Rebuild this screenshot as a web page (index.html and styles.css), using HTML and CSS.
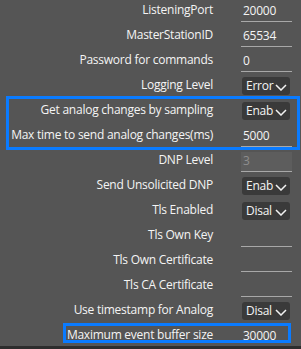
FILE: index.html
```html
<!DOCTYPE html>
<html>
<head>
<meta charset="utf-8">
<link rel="stylesheet" href="styles.css">
</head>
<body>
<div class="panel">
  <div class="row"><div class="label">ListeningPort</div><div class="tb">20000</div></div>
  <div class="row"><div class="label">MasterStationID</div><div class="tb">65534</div></div>
  <div class="row"><div class="label">Password for commands</div><div class="tb">0</div></div>
  <div class="row"><div class="label">Logging Level</div><div class="cb"><span class="cb-text">Error</span><svg class="chev" width="12" height="7" viewBox="0 0 12 7"><polyline points="1,1 6,6 11,1" fill="none" stroke="#f2f2f2" stroke-width="1.5"/></svg></div></div>
  <div class="group">
    <div class="row"><div class="label">Get analog changes by sampling</div><div class="cb"><span class="cb-text">Enab</span><svg class="chev" width="12" height="7" viewBox="0 0 12 7"><polyline points="1,1 6,6 11,1" fill="none" stroke="#f2f2f2" stroke-width="1.5"/></svg></div></div>
    <div class="row"><div class="label">Max time to send analog changes(ms)</div><div class="tb">5000</div></div>
  </div>
  <div class="row"><div class="label">DNP Level</div><div class="tb disabled">3</div></div>
  <div class="row"><div class="label">Send Unsolicited DNP</div><div class="cb"><span class="cb-text">Enab</span><svg class="chev" width="12" height="7" viewBox="0 0 12 7"><polyline points="1,1 6,6 11,1" fill="none" stroke="#f2f2f2" stroke-width="1.5"/></svg></div></div>
  <div class="row"><div class="label">Tls Enabled</div><div class="cb"><span class="cb-text">Disal</span><svg class="chev" width="12" height="7" viewBox="0 0 12 7"><polyline points="1,1 6,6 11,1" fill="none" stroke="#f2f2f2" stroke-width="1.5"/></svg></div></div>
  <div class="row"><div class="label">Tls Own Key</div><div class="tb"></div></div>
  <div class="row"><div class="label">Tls Own Certificate</div><div class="tb"></div></div>
  <div class="row"><div class="label">Tls CA Certificate</div><div class="tb"></div></div>
  <div class="row"><div class="label">Use timestamp for Analog</div><div class="cb"><span class="cb-text">Disal</span><svg class="chev" width="12" height="7" viewBox="0 0 12 7"><polyline points="1,1 6,6 11,1" fill="none" stroke="#f2f2f2" stroke-width="1.5"/></svg></div></div>
  <div class="row last"><div class="label">Maximum event buffer size</div><div class="tb plain">30000</div></div>
</div>
<div class="bottom"></div>
</body>
</html>
```
FILE: styles.css
```css
html, body {
  margin: 0;
  padding: 0;
}
body {
  width: 301px;
  height: 349px;
  overflow: hidden;
  background: #555555;
  color: #f4f4f4;
  font-family: "Open Sans", "Noto Sans", sans-serif;
  font-size: 12px;
  letter-spacing: -0.25px;
}
.panel {
  display: flex;
  flex-direction: column;
  margin-top: -3px;
}
.row {
  display: grid;
  grid-template-columns: 1fr 51px;
  column-gap: 28px;
  padding-right: 9px;
  height: 25px;
  box-sizing: border-box;
  position: relative;
}
.label {
  text-align: right;
  white-space: nowrap;
  line-height: 25px;
}
.tb {
  box-sizing: border-box;
  height: 25px;
  border-bottom: 1px solid #a8a8a8;
  padding: 6px 0 0 2px;
  line-height: 16px;
}
.tb.disabled {
  margin-top: 5px;
  height: 20px;
  padding-top: 1px;
  background: #5d5d5d;
  color: #8e8e8e;
}
.tb.plain {
  border-bottom: none;
}
.cb {
  box-sizing: border-box;
  margin: 5px 0 0 1px;
  width: 48px;
  height: 18px;
  background: #3a3a3a;
  border-radius: 3px;
  display: flex;
  align-items: flex-start;
  padding: 1px 0 0 4px;
  line-height: 16px;
}
.cb-text {
  width: 29px;
  white-space: nowrap;
}
.chev {
  margin: 6px 0 0 0;
}
.group {
  position: relative;
}
.group::after {
  content: "";
  position: absolute;
  top: -1px;
  bottom: -3px;
  left: 6px;
  right: 1px;
  border: 3px solid #0a7bff;
  pointer-events: none;
}
.row.last {
  height: 24px;
}
.row.last::after {
  content: "";
  position: absolute;
  top: 1px;
  bottom: 3px;
  left: 63px;
  right: 10px;
  border: 3px solid #0a7bff;
  pointer-events: none;
}
.bottom {
  height: 3px;
  background: #2d2d2d;
}
```
